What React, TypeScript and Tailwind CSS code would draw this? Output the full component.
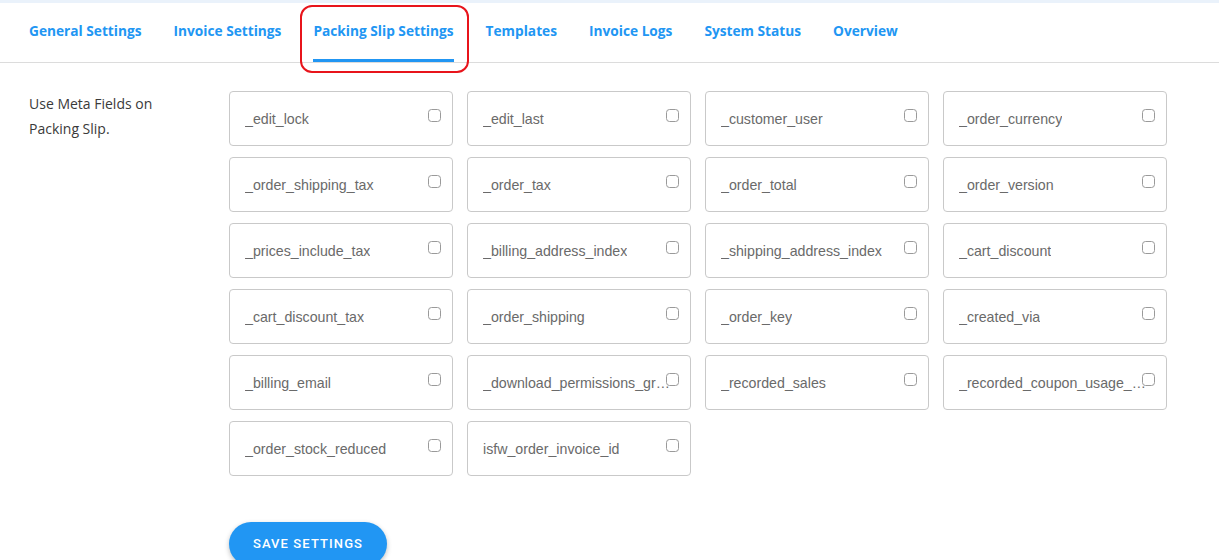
import React from "react";

const tabs = [
  "General Settings",
  "Invoice Settings",
  "Packing Slip Settings",
  "Templates",
  "Invoice Logs",
  "System Status",
  "Overview",
];

const fields = [
  "_edit_lock",
  "_edit_last",
  "_customer_user",
  "_order_currency",
  "_order_shipping_tax",
  "_order_tax",
  "_order_total",
  "_order_version",
  "_prices_include_tax",
  "_billing_address_index",
  "_shipping_address_index",
  "_cart_discount",
  "_cart_discount_tax",
  "_order_shipping",
  "_order_key",
  "_created_via",
  "_billing_email",
  "_download_permissions_granted",
  "_recorded_sales",
  "_recorded_coupon_usage_counts",
  "_order_stock_reduced",
  "isfw_order_invoice_id",
];

const FieldCard: React.FC<{ name: string }> = ({ name }) => {
  return (
    <label className="relative flex h-[55px] items-center rounded-[4px] border border-[#c9c9c9] bg-white pl-[15px] pr-[15px] pt-[2px]">
      <span className="truncate font-['Liberation_Sans',Arial,sans-serif] text-[14.2px] text-[#6a6a6a]">
        {name}
      </span>
      <span className="absolute right-[11px] top-[17px] h-[13px] w-[13px] rounded-[3.5px] border border-[#9a9a9a] bg-white" />
    </label>
  );
};

export default function App() {
  return (
    <div className="h-[560px] w-[1219px] overflow-hidden bg-white font-['Open_Sans',sans-serif]">
      <div className="h-[3px] bg-[#eaf2fb]" />
      <div className="relative border-b border-[#dcdcdc] pl-[29px]">
        <nav className="flex gap-[32px]">
          {tabs.map((t) => {
            const active = t === "Packing Slip Settings";
            return (
              <div
                key={t}
                className={`flex h-[59px] flex-col items-center justify-between pt-[18px] ${
                  active ? "border-b-[3px] border-[#2196f3]" : "border-b-[3px] border-transparent"
                }`}
              >
                <span className="text-[13.7px] font-bold leading-[20px] text-[#2196f3]">
                  {t}
                </span>
              </div>
            );
          })}
        </nav>
        <div className="pointer-events-none absolute left-[300px] top-[2px] h-[68px] w-[169px] rounded-[12px] border-[2px] border-[#e8141b]" />
      </div>
      <div className="flex pl-[29px] pt-[28px]">
        <div className="w-[200px] text-[14px] leading-[25px] text-[#3a3a3a]">
          Use Meta Fields on
          <br />
          Packing Slip.
        </div>
        <div className="w-[938px]">
          <div className="grid grid-cols-4 gap-x-[14px] gap-y-[11px]">
            {fields.map((f) => (
              <FieldCard key={f} name={f} />
            ))}
          </div>
          <button className="mt-[46px] h-[44px] w-[158px] rounded-full bg-[#2196f3] font-['Roboto',sans-serif] text-[13px] font-medium tracking-[1.1px] text-white shadow-[0_2px_5px_rgba(0,0,0,0.25)]">
            SAVE SETTINGS
          </button>
        </div>
      </div>
    </div>
  );
}
